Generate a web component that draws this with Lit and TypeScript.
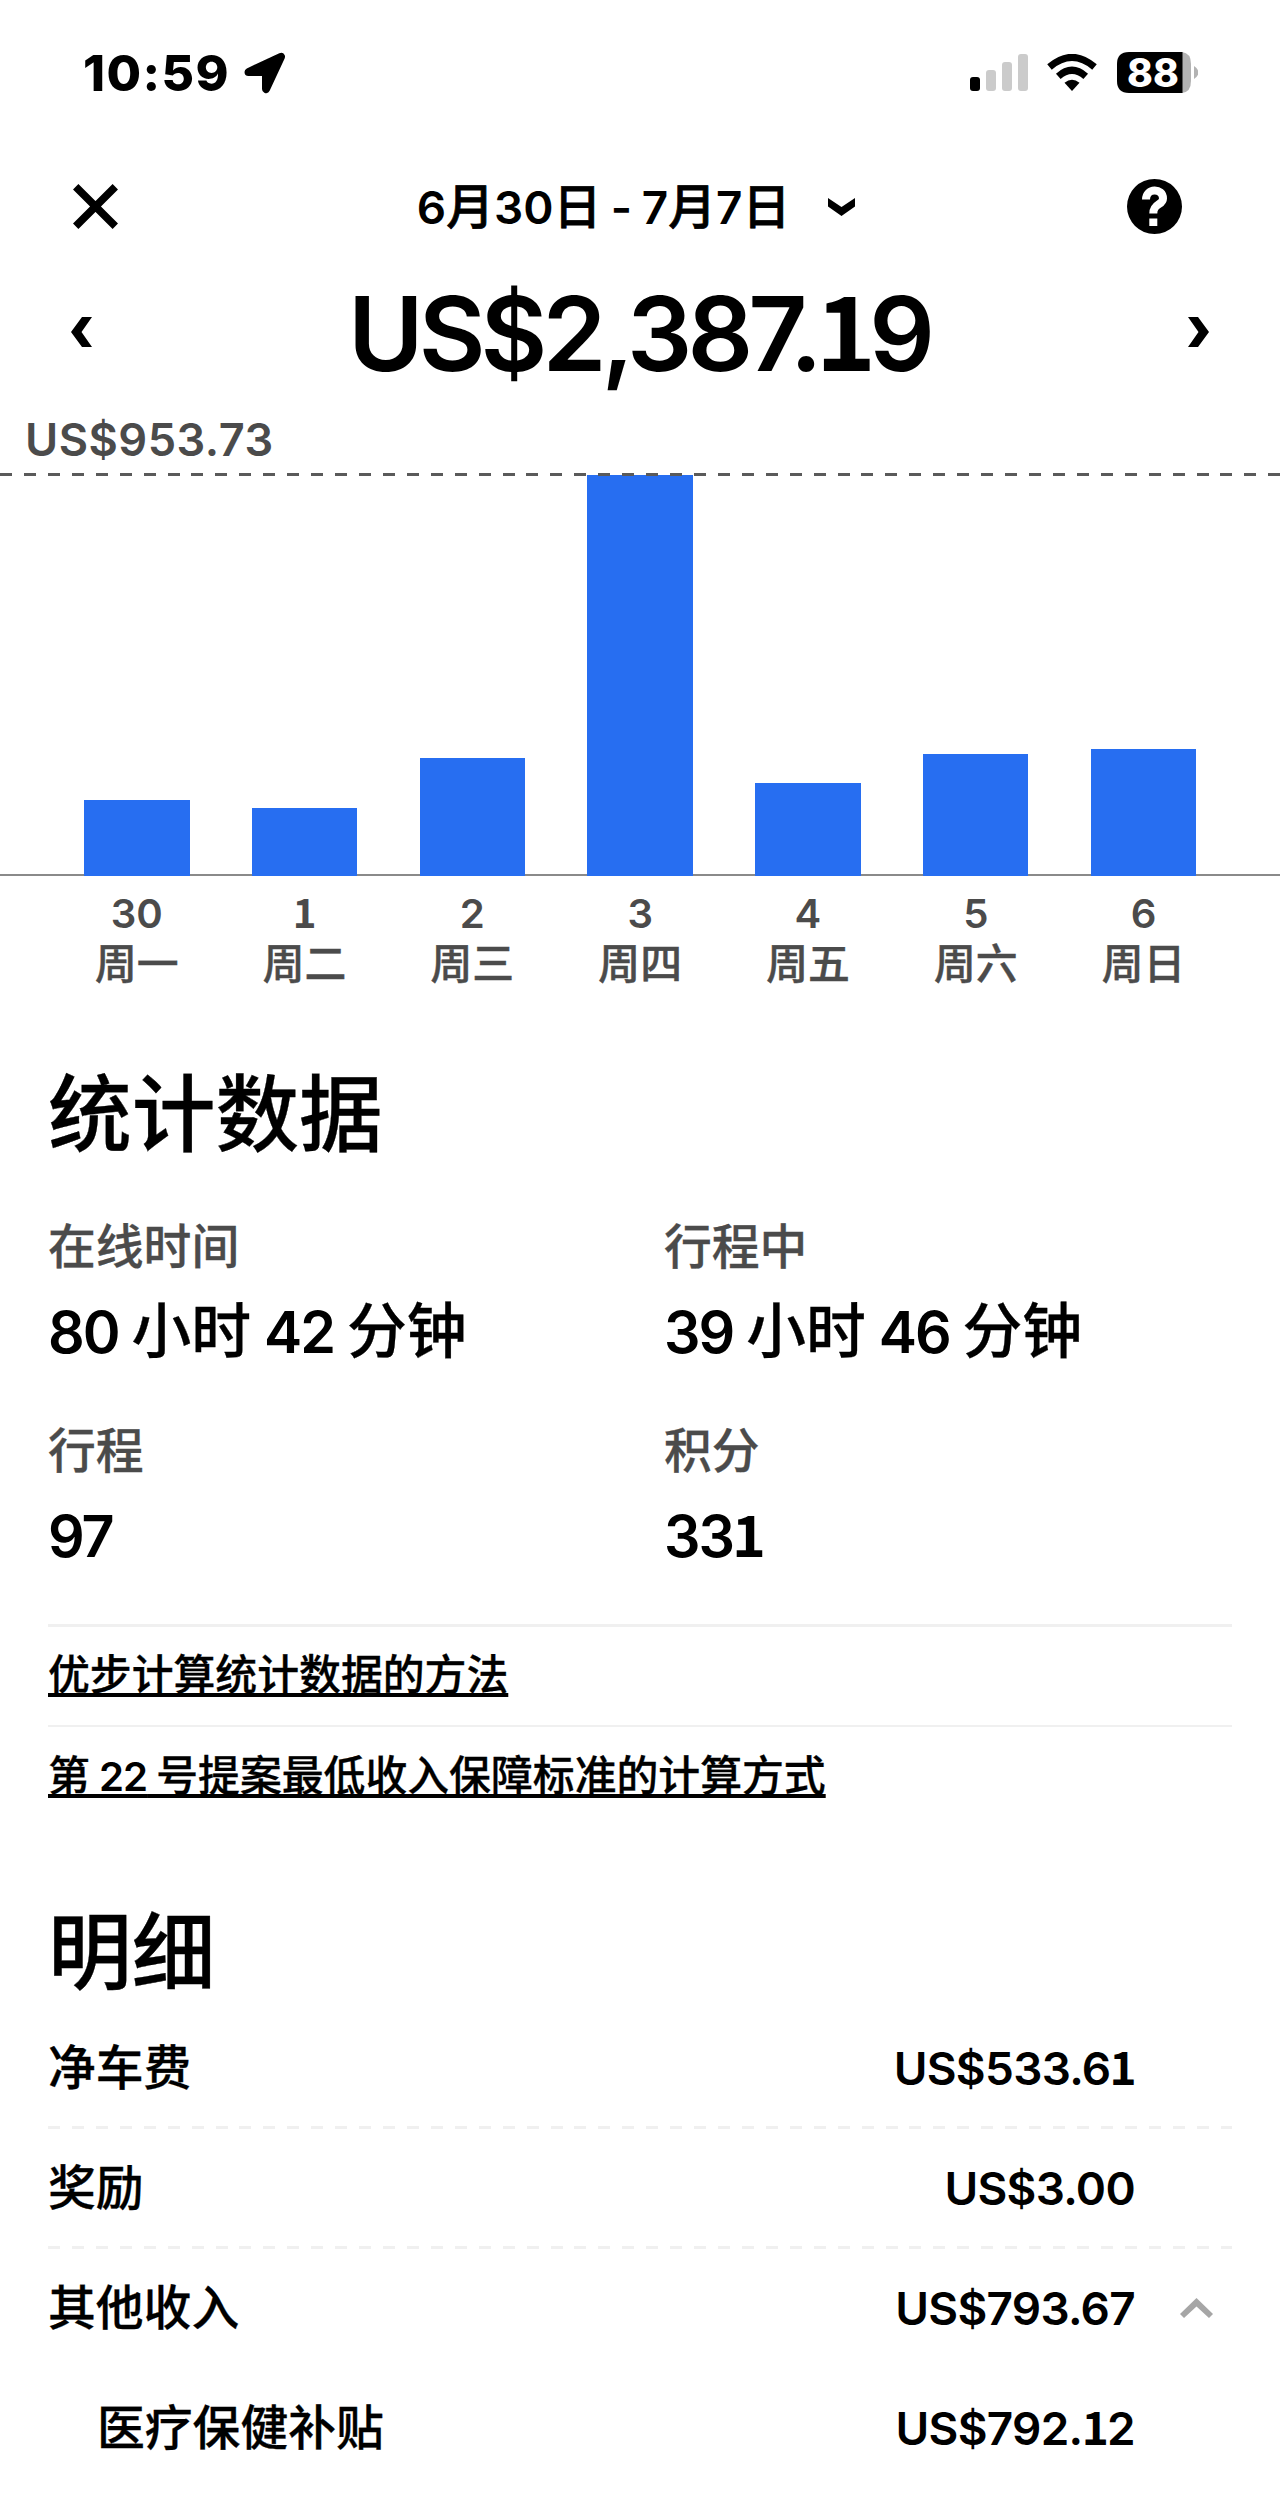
import { LitElement, html, css, svg } from "lit";
import { customElement } from "lit/decorators.js";

interface Day { date: string; name: string; height: number; }
interface Stat { label: string; value: string; }
interface Item { label: string; amount: string; open?: boolean; child?: boolean; last?: boolean; }

const DAYS: Day[] = [
  { date: "30", name: "周一", height: 75.5 },
  { date: "1", name: "周二", height: 68 },
  { date: "2", name: "周三", height: 118 },
  { date: "3", name: "周四", height: 400.5 },
  { date: "4", name: "周五", height: 93 },
  { date: "5", name: "周六", height: 121.5 },
  { date: "6", name: "周日", height: 126.5 },
];

const STATS: Stat[] = [
  { label: "在线时间", value: "80 小时 42 分钟" },
  { label: "行程中", value: "39 小时 46 分钟" },
  { label: "行程", value: "97" },
  { label: "积分", value: "331" },
];

const ITEMS: Item[] = [
  { label: "净车费", amount: "US$533.61" },
  { label: "奖励", amount: "US$3.00" },
  { label: "其他收入", amount: "US$793.67", open: true, last: true },
  { label: "医疗保健补贴", amount: "US$792.12", child: true, last: true },
];

/** Wraps Latin runs so they can be sized apart from the Chinese text; the digit 1 gets a slab form. */
const mixed = (text: string) =>
  text.split(/([\x21-\x7e]+)/).map((part, i) =>
    i % 2
      ? html`<span class="num">${part.split(/(1)/).map((p) => (p === "1" ? html`<span class="one">1</span>` : p))}</span>`
      : part
  );

@customElement("app-root")
export class AppRoot extends LitElement {
  static styles = css`
    :host {
      display: block;
      width: 1280px;
      height: 2493px;
      overflow: hidden;
      background: #fff;
      color: #000;
      font-family: Inter, "Noto Sans CJK SC", sans-serif;
      font-weight: 500;
    }
    * { box-sizing: border-box; }
    svg { display: block; flex: none; }
    .num { font-size: 0.96em; font-weight: 600; line-height: 0; -webkit-text-stroke: 0; }
    .one { font-family: "Noto Sans CJK SC", sans-serif; font-weight: 700; line-height: 0; margin: 0 -0.02em; }

    .status { display: flex; align-items: center; height: 145px; padding: 0 82px 0 83px; }
    .clock { font-size: 50px; font-weight: 800; line-height: 60px; width: 161px; white-space: nowrap; letter-spacing: 1.4px; }
    .signals { display: flex; align-items: center; margin-left: auto; }
    .wifi { margin: 0 20px 0 19px; }
    .battery { position: relative; width: 81px; height: 41px; }
    .level {
      position: absolute; left: 0; top: 0; width: 74px; height: 41px;
      font-size: 39px; font-weight: 800; line-height: 41px; color: #fff; padding-left: 10px;
    }

    .header { display: flex; align-items: center; justify-content: space-between; height: 123px; padding: 0 98px 0 73px; }
    .range { display: flex; align-items: center; gap: 38px; font-size: 47.8px; line-height: 60px; margin-left: 27px; white-space: nowrap; word-spacing: -3.2px; -webkit-text-stroke: 0.016em; }

    .total { display: flex; align-items: center; justify-content: space-between; height: 128px; padding: 0 71px; }
    .sum { font-size: 107px; line-height: 128px; letter-spacing: -4.9px; margin-left: -2px; white-space: nowrap; }

    .peak { padding: 12px 0 4px 25px; font-size: 47px; line-height: 61px; color: #4b4b4b; letter-spacing: 0.5px; }
    .plot {
      position: relative; display: flex; align-items: flex-end; gap: 62.3px; height: 402.5px; padding-left: 84px;
      background: linear-gradient(#8a8a8a, #8a8a8a) 0 100% / 100% 2px no-repeat;
    }
    .limit {
      position: absolute; left: 0; top: 0; width: 100%; height: 3px;
      background: repeating-linear-gradient(90deg, #5a5a5a 0 12px, transparent 12px 23.93px);
    }
    .bar { width: 105.5px; background: #276ef1; }
    .days { display: grid; grid-template-columns: repeat(7, 167.8px); padding: 12px 0 0 52.9px; text-align: center; font-size: 41.85px; line-height: 50px; color: #4b4b4b; -webkit-text-stroke: 0.01em; }
    .weekday { padding-top: 1px; }

    .section { padding: 0 48px; -webkit-text-stroke: 0.02em; }
    .title { margin: 0; font-size: 83.7px; line-height: 100px; font-weight: 500; }
    .title.stats { margin-top: 76px; }
    .title.detail { margin-top: 78px; }
    .grid { display: grid; grid-template-columns: 616px 568px; row-gap: 48px; margin-top: 52.5px; }
    .label { font-size: 47.8px; line-height: 60px; color: #4b4b4b; }
    .value { margin-top: 12px; font-size: 59.8px; line-height: 84px; word-spacing: -3px; }
    .value .num { letter-spacing: -0.035em; }
    .links { margin-top: 47px; font-size: 41.85px; word-spacing: -2px; }
    .link { border-top: 3px solid #f0f0f0; line-height: 95px; padding-bottom: 2.5px; }
    .link + .link { border-top-width: 2px; line-height: 98px; padding: 0; }
    .link .num { letter-spacing: -1px; }
    .link a { text-decoration: underline 3.5px; text-underline-offset: 3px; text-decoration-skip-ink: none; color: inherit; }
    .items { margin-top: 6px; }
    .item { display: flex; align-items: center; height: 120px; padding: 0 19px 2px 0; font-size: 47.8px; line-height: 60px; }
    .item.dashed { background: repeating-linear-gradient(90deg, #f0f0f0 0 12px, transparent 12px 23.93px) 0 100% / 100% 3px no-repeat; }
    .item.child { padding-left: 49px; }
    .amount { margin-left: auto; letter-spacing: -0.7px; }
    .toggle { width: 78px; display: flex; justify-content: flex-end; }
  `;

  private chevron(points: string, w: number, h: number, color = "#000") {
    return html`<svg width=${w} height=${h} viewBox="0 0 ${w} ${h}">${svg`<polygon points=${points} fill=${color} stroke="none" />`}</svg>`;
  }

  private renderStatus() {
    return html`
      <div class="status">
        <div class="clock">10:59</div>
        <svg width="42" height="42" viewBox="0 0 42 42">
          <path d="M4.5 20 L37 4.8 L22 37 L22 20Z" stroke="#000" stroke-width="8" stroke-linejoin="round" />
        </svg>
        <div class="signals">
          <svg width="58" height="38" viewBox="0 0 58 38">
            <rect x="0" y="23" width="10" height="14" rx="3" />
            <rect x="16" y="16" width="10" height="21" rx="3" fill="#cbcbcb" />
            <rect x="32" y="8" width="10" height="29" rx="3" fill="#cbcbcb" />
            <rect x="48" y="0" width="10" height="37" rx="3" fill="#cbcbcb" />
          </svg>
          <svg class="wifi" width="50" height="37" viewBox="0 0 50 37">
            <path d="M25 37 L17.5 28.8 Q25 22.5 32.5 28.8Z" />
            <path d="M11.3 22.3 Q25 10.2 38.7 22.3" fill="none" stroke="#000" stroke-width="7" />
            <path d="M2.5 13 Q25 -6.2 47.5 13" fill="none" stroke="#000" stroke-width="7" />
          </svg>
          <div class="battery">
            <svg width="81" height="41" viewBox="0 0 81 41">
              <path d="M65 0 Q74 1 74 12 V29 Q74 40 65 41Z" fill="#b3b3b3" />
              <path d="M12 0 H65.5 V41 H12 Q0 41 0 29 V12 Q0 0 12 0Z" />
              <path d="M77 14 Q81.5 17 81.5 20.5 Q81.5 24 77 27Z" fill="#b3b3b3" />
            </svg>
            <div class="level">88</div>
          </div>
        </div>
      </div>
    `;
  }

  render() {
    return html`
      ${this.renderStatus()}
      <div class="header">
        <svg width="45" height="45" viewBox="0 0 45 45">
          <path d="M2.7 2.7 L42.3 42.3 M42.3 2.7 L2.7 42.3" stroke="#000" stroke-width="7.6" />
        </svg>
        <div class="range">
          <span>${mixed("6月30日 - 7月7日")}</span>
          ${this.chevron("0,0 13.5,9 27,0 27,8.5 13.5,18 0,8.5", 27, 18)}
        </div>
        <svg width="55" height="55" viewBox="0 0 55 55">
          <circle cx="27.5" cy="27.5" r="27.5" />
          <path d="M19 20.5 C19 8.6 36 8.6 36 19.5 C36 26.5 26.3 24 26.3 34.5" fill="none" stroke="#fff" stroke-width="8" />
          <rect x="22.3" y="39.5" width="8" height="7.5" fill="#fff" />
        </svg>
      </div>
      <div class="total">
        ${this.chevron("11,0 21,0 10.5,15 21,30 11,30 0,15", 21, 30)}
        <div class="sum">${mixed("US$2,387.19")}</div>
        ${this.chevron("0,0 10,0 21,15 10,30 0,30 10.5,15", 21, 30)}
      </div>
      <div class="peak">${mixed("US$953.73")}</div>
      <div class="plot">
        ${DAYS.map((d) => html`<div class="bar" style="height:${d.height}px"></div>`)}
        <div class="limit"></div>
      </div>
      <div class="days">
        ${DAYS.map((d) => html`<div><div>${mixed(d.date)}</div><div class="weekday">${d.name}</div></div>`)}
      </div>
      <div class="section">
        <h2 class="title stats">统计数据</h2>
        <div class="grid">
          ${STATS.map((s) => html`<div><div class="label">${s.label}</div><div class="value">${mixed(s.value)}</div></div>`)}
        </div>
        <div class="links">
          <div class="link"><a>优步计算统计数据的方法</a></div>
          <div class="link"><a>${mixed("第 22 号提案最低收入保障标准的计算方式")}</a></div>
        </div>
        <h2 class="title detail">明细</h2>
        <div class="items">
          ${ITEMS.map((i) => html`
            <div class="item ${i.last ? "" : "dashed"} ${i.child ? "child" : ""}">
              <span>${i.label}</span>
              <span class="amount">${mixed(i.amount)}</span>
              <span class="toggle">${i.open ? this.chevron("0,16 16.5,0 33,16 29,20 16.5,8.5 4,20", 33, 20, "#a6a6a6") : ""}</span>
            </div>`)}
        </div>
      </div>
    `;
  }
}
